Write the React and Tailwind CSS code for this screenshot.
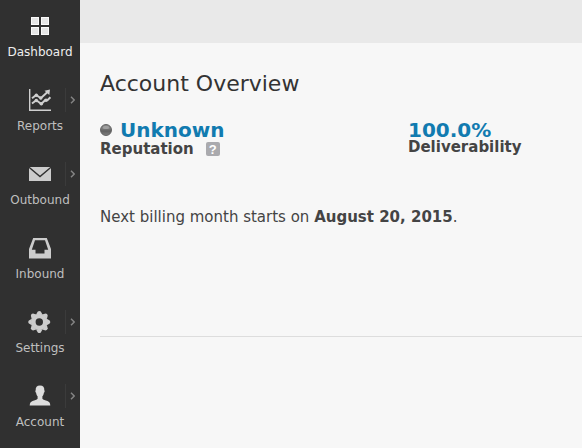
const icons = {
  dashboard: (
    <g fill="#e6e6e6" stroke="#fafafa" strokeWidth="1">
      <rect x="3.500" y="3.500" width="7" height="7" />
      <rect x="13.500" y="3.500" width="7" height="7" />
      <rect x="3.500" y="13.500" width="7" height="7" />
      <rect x="13.500" y="13.500" width="7" height="7" />
    </g>
  ),
  reports: (
    <g fill="none" stroke="#cfcfcf">
      <path d="M1.700 1v21.300H23" strokeWidth="1.400" />
      <path d="M4 10.300 8.300 7l4.500 3.200L19.500 4" strokeWidth="2" />
      <path d="M4 15.500 8.300 12.300l5 3.700 3.700-3.700h2.400l3-3" strokeWidth="2" />
      <path d="M16.500 2.800 22 1.500 21.300 7Z" fill="#cfcfcf" stroke="none" />
      <g fill="#cfcfcf" stroke="none">
        <circle cx="8.300" cy="7.200" r="1.700" />
        <circle cx="12.800" cy="10" r="1.700" />
        <circle cx="8.300" cy="12.500" r="1.700" />
        <circle cx="13.300" cy="15.700" r="1.800" />
        <circle cx="18" cy="12.300" r="1.700" />
      </g>
    </g>
  ),
  outbound: (
    <g>
      <rect x="1" y="5" width="22" height="14" fill="#cccccc" />
      <path d="M1 5.200 12 14.600 23 5.200" fill="none" stroke="#303030" strokeWidth="1.400" />
    </g>
  ),
  inbound: (
    <path
      fill="#cccccc"
      fillRule="evenodd"
      d="M5.200 2h13.600L23 13V22.500H1V13Z M7 4.200 3.800 13.800H7.500v3.700h9v-3.700h3.700L17 4.200Z"
    />
  ),
  settings: (
    <g fill="#cccccc" transform="translate(11.300 12)">
      <path fillRule="evenodd" d="M0-8.300A8.300 8.300 0 1 0 0 8.300A8.300 8.300 0 1 0 0-8.300ZM0-3.700A3.700 3.700 0 1 1 0 3.700A3.700 3.700 0 1 1 0-3.700Z" />
      {[0, 45, 90, 135, 180, 225, 270, 315].map((angle) => (
        <path key={angle} d="M-3.200-7.500 -1.500-10.400Q0-11.700 1.500-10.400L3.200-7.500Z" transform={`rotate(${angle})`} />
      ))}
    </g>
  ),
  account: (
    <path
      fill="#dddddd"
      d="M12 1.500c-3.200 0-4.500 1.700-4.300 4.700-.6.400-.4 2 .4 2.500.3 1.700.8 2.800 1.500 3.500v2.600c-.7 1.200-3 1.600-5 2.300C2.600 17.900 1.900 19 1.700 21.600h20.600c-.2-2.600-.9-3.700-2.900-4.500-2-.7-4.300-1.100-5-2.300v-2.600c.7-.7 1.200-1.800 1.500-3.500.8-.5 1-2.100.4-2.500.2-3-1.100-4.700-4.300-4.700Z"
    />
  ),
};

const items = [
  { icon: "dashboard", label: "Dashboard", active: true },
  { icon: "reports", label: "Reports", menu: true },
  { icon: "outbound", label: "Outbound", menu: true },
  { icon: "inbound", label: "Inbound" },
  { icon: "settings", label: "Settings", menu: true },
  { icon: "account", label: "Account", menu: true },
];

function NavItem({ icon, label, active, menu }) {
  return (
    <a className="block h-[74px] pt-3.5">
      <div className="grid h-6 grid-cols-[28px_24px_13px_15px]">
        <span />
        <svg viewBox="0 0 24 24" className="size-6">{icons[icon]}</svg>
        <span />
        {menu && (
          <span className="flex items-center border-l border-[#3b3b3b] pl-1">
            <svg viewBox="0 0 5 8" className="h-2 w-[5px]">
              <path d="M1 .8 4.200 4 1 7.200" fill="none" stroke="#858585" strokeWidth="1.400" />
            </svg>
          </span>
        )}
      </div>
      <div className={`mt-1.5 text-center text-xs leading-4 ${active ? "text-[#eeeeee]" : "text-[#bfbfbf]"}`}>
        {label}
      </div>
    </a>
  );
}

export default function App() {
  return (
    <div className="flex h-[448px] w-[582px] overflow-hidden bg-[#f7f7f7] font-['DejaVu_Sans',sans-serif] text-[#444444]">
      <nav className="w-20 shrink-0 bg-[#303030]">
        {items.map((item) => (
          <NavItem key={item.label} {...item} />
        ))}
      </nav>
      <div className="min-w-0 flex-1">
        <header className="h-[43px] bg-[#e9e9e9]" />
        <main className="pl-5 pt-[25px]">
          <h1 className="text-[22px] leading-8 text-[#333333]">Account Overview</h1>
          <div className="mt-[19px] flex h-[39px]">
            <section className="w-[308px]">
              <div className="flex h-[22px] items-center">
                <span className="mr-2 flex size-3 flex-col items-center rounded-full border border-[#626262] bg-linear-to-b from-[#858585] from-30% via-[#606060] via-60% to-[#7c7c7c] pt-px">
                  <span className="h-[3px] w-1.5 rounded-full bg-[#a0a0a0]" />
                </span>
                <span className="text-xl leading-[22px] font-bold text-[#117bb0]">Unknown</span>
              </div>
              <div className="flex h-4 items-center">
                <span className="text-[15px] leading-4 font-bold">Reputation</span>
                <span className="ml-3 flex size-3.5 items-center justify-center rounded-xs bg-[#aaaaae] font-['Liberation_Sans',sans-serif] text-[13px] leading-none font-bold text-white">
                  ?
                </span>
              </div>
            </section>
            <section>
              <div className="pt-px text-xl leading-5 font-bold text-[#117bb0]">100.0%</div>
              <div className="text-[15px] leading-[14px] font-bold">Deliverability</div>
            </section>
          </div>
          <p className="mt-[49px] text-[15px] leading-5 whitespace-nowrap">
            Next billing month starts on <strong>August 20, 2015</strong>.
          </p>
          <hr className="mt-[109px] border-[#dddddd]" />
        </main>
      </div>
    </div>
  );
}
